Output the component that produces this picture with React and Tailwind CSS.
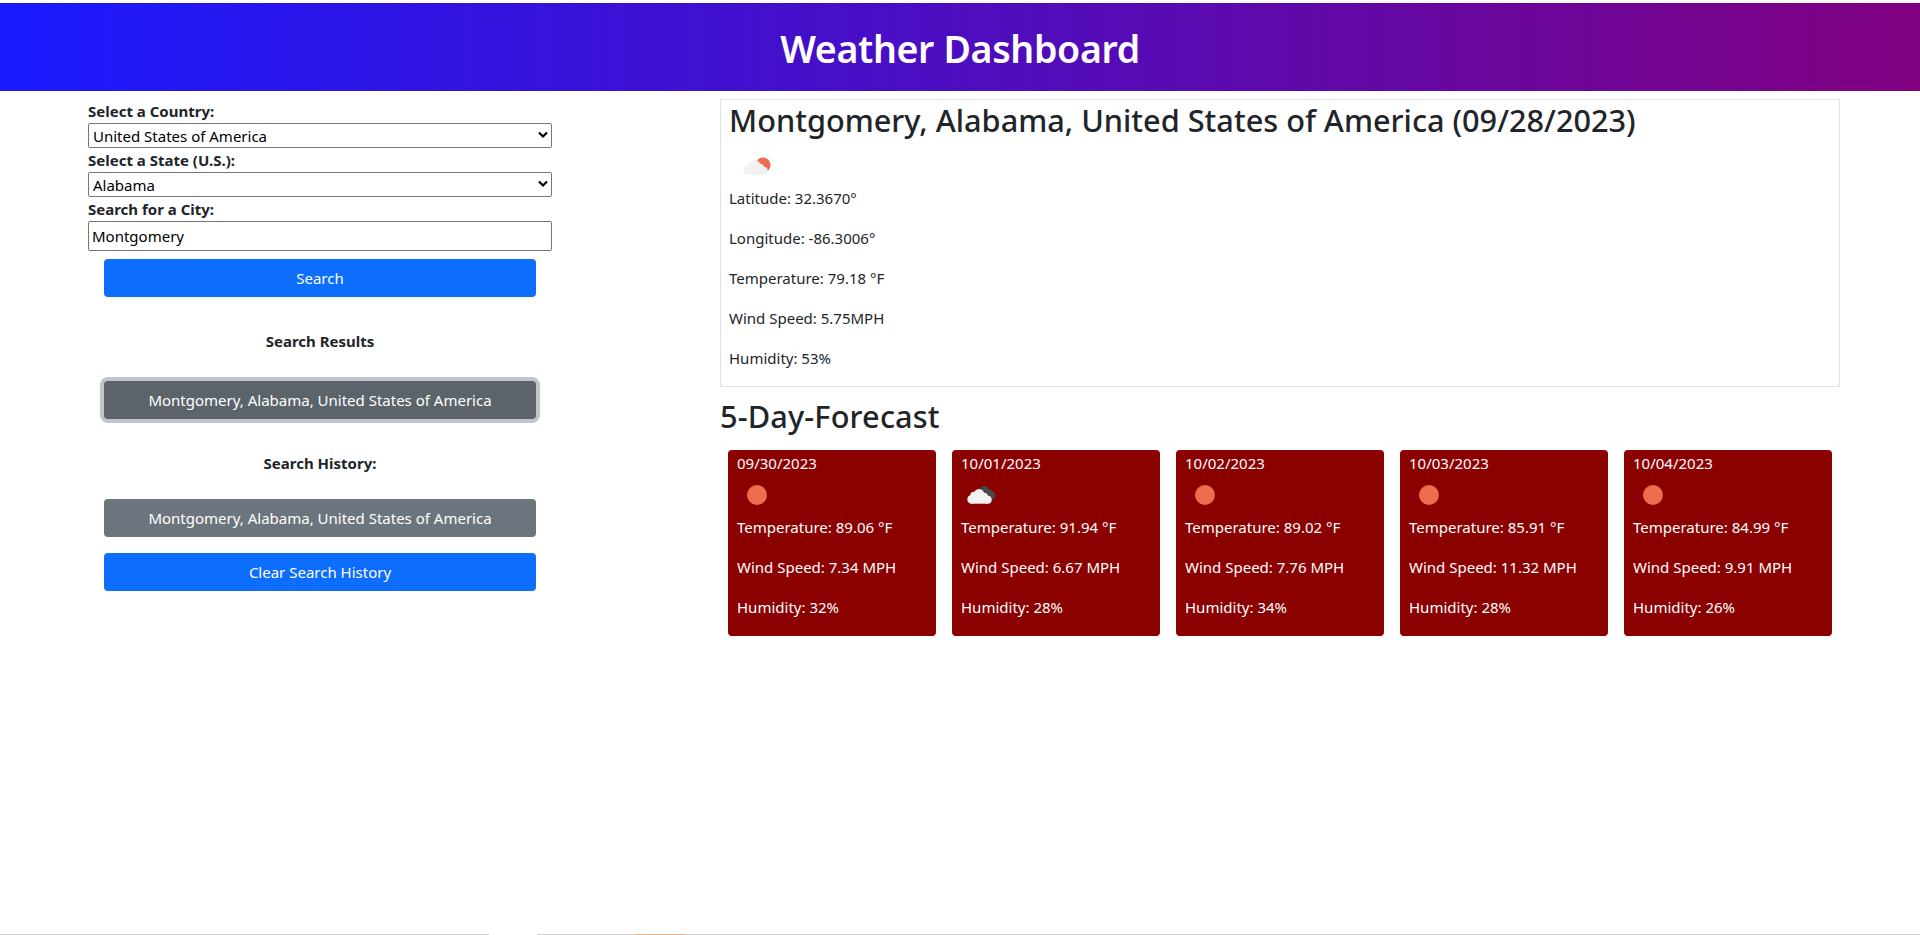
const FORECAST = [
  { date: "09/30/2023", icon: "sun", temp: "89.06", wind: "7.34", humidity: 32 },
  { date: "10/01/2023", icon: "clouds", temp: "91.94", wind: "6.67", humidity: 28 },
  { date: "10/02/2023", icon: "sun", temp: "89.02", wind: "7.76", humidity: 34 },
  { date: "10/03/2023", icon: "sun", temp: "85.91", wind: "11.32", humidity: 28 },
  { date: "10/04/2023", icon: "sun", temp: "84.99", wind: "9.91", humidity: 26 },
];

const CITY = "Montgomery, Alabama, United States of America";

function Cloud() {
  return (
    <g fill="#f2f2f2">
      <circle cx="10.6" cy="24.4" r="4.3" />
      <circle cx="13" cy="20.4" r="3.7" />
      <circle cx="18" cy="19.2" r="5.2" />
      <circle cx="23.2" cy="21.4" r="3.6" />
      <circle cx="26.7" cy="24.7" r="4" />
      <rect x="10.6" y="20" width="16.1" height="8.7" />
    </g>
  );
}

function WeatherIcon({ kind }) {
  return (
    <svg viewBox="0 0 40 40" className="block size-10">
      {kind === "sun" && <circle cx="20" cy="20" r="10" fill="#ec6e4c" />}
      {kind === "partly" && (
        <>
          <circle cx="26" cy="19" r="7.6" fill="#ec6e4c" />
          <Cloud />
        </>
      )}
      {kind === "clouds" && (
        <>
          <g fill="#484848">
            <circle cx="23.5" cy="15.7" r="4.6" />
            <circle cx="27.6" cy="17.4" r="3.3" />
            <circle cx="30.3" cy="20.6" r="4.1" />
          </g>
          <Cloud />
        </>
      )}
    </svg>
  );
}

function Field({ label, children }) {
  return (
    <label className="block">
      <span className="block h-6 font-bold leading-6">{label}</span>
      {children}
    </label>
  );
}

function Select({ value }) {
  return (
    <span className="flex h-[25px] items-center justify-between rounded-[2px] border border-[#767676] bg-white pl-1 pr-[3px] text-black">
      <span className="leading-6">{value}</span>
      <svg viewBox="0 0 10 8" className="mb-0.5 h-2 w-2.5" fill="none" stroke="#000" strokeWidth="2.2">
        <path d="M1 1.5 L5 5.5 L9 1.5" />
      </svg>
    </span>
  );
}

function Button({ className, children }) {
  return (
    <button type="button" className={`h-[38px] w-full rounded-[4px] text-white ${className}`}>
      {children}
    </button>
  );
}

export default function App() {
  return (
    <div className="flex h-[935px] flex-col overflow-hidden bg-white font-['Noto_Sans',sans-serif] text-[15px] leading-6 text-[#212529]">
      <header className="mt-[3px] flex h-22 items-center justify-center bg-[linear-gradient(to_right,#1a1aff,#800080)] pt-1">
        <h1 className="text-[37.5px] font-semibold leading-12 tracking-[-0.33px] text-white">
          Weather Dashboard
        </h1>
      </header>

      <main className="flex grow items-start pl-22">
        <aside className="mt-2 w-[464px]">
          <Field label="Select a Country:">
            <Select value="United States of America" />
          </Field>
          <Field label="Select a State (U.S.):">
            <Select value="Alabama" />
          </Field>
          <Field label="Search for a City:">
            <input
              defaultValue="Montgomery"
              className="block h-[30px] w-full rounded-[2px] border border-[#767676] px-[3px] text-black outline-none"
            />
          </Field>

          <div className="px-4 pt-2 text-center">
            <Button className="bg-[#0d6efd]">Search</Button>
            <h2 className="mt-8 font-bold">Search Results</h2>
            <Button className="mt-7 bg-[#5c636a] shadow-[0_0_0_4px_#c1c4c8]">{CITY}</Button>
            <h2 className="mt-8 font-bold">Search History:</h2>
            <Button className="mt-6 bg-[#6c757d]">{CITY}</Button>
            <Button className="mt-4 bg-[#0d6efd]">Clear Search History</Button>
          </div>
        </aside>

        <div className="ml-42 mt-2 w-[1120px]">
          <section className="h-[288px] border border-[#dee2e6] px-2">
            <h2 className="pt-px text-[30.7px] font-medium leading-[38px]">{CITY} (09/28/2023)</h2>
            <div className="mt-[7px] pl-2">
              <WeatherIcon kind="partly" />
            </div>
            <div className="space-y-4">
              <p>Latitude: 32.3670°</p>
              <p>Longitude: -86.3006°</p>
              <p>Temperature: 79.18 °F</p>
              <p>Wind Speed: 5.75MPH</p>
              <p>Humidity: 53%</p>
            </div>
          </section>

          <h2 className="mt-2.5 text-[30.7px] font-medium leading-[38px] tracking-[0.15px]">
            5-Day-Forecast
          </h2>
          <div className="mt-[15px] flex gap-4 px-2">
            {FORECAST.map((day) => (
              <article
                key={day.date}
                className="h-[186px] flex-1 rounded-[4px] bg-[#8b0000] px-[9px] pt-px text-white"
              >
                <p>{day.date}</p>
                <WeatherIcon kind={day.icon} />
                <div className="space-y-4">
                  <p>Temperature: {day.temp} °F</p>
                  <p>Wind Speed: {day.wind} MPH</p>
                  <p>Humidity: {day.humidity}%</p>
                </div>
              </article>
            ))}
          </div>
        </div>
      </main>

      <footer className="flex h-px shrink-0 bg-[#d0d0d0]">
        <span className="ml-[489px] w-12 bg-white" />
        <span className="ml-25 w-12 bg-[#e8b080]" />
      </footer>
    </div>
  );
}
